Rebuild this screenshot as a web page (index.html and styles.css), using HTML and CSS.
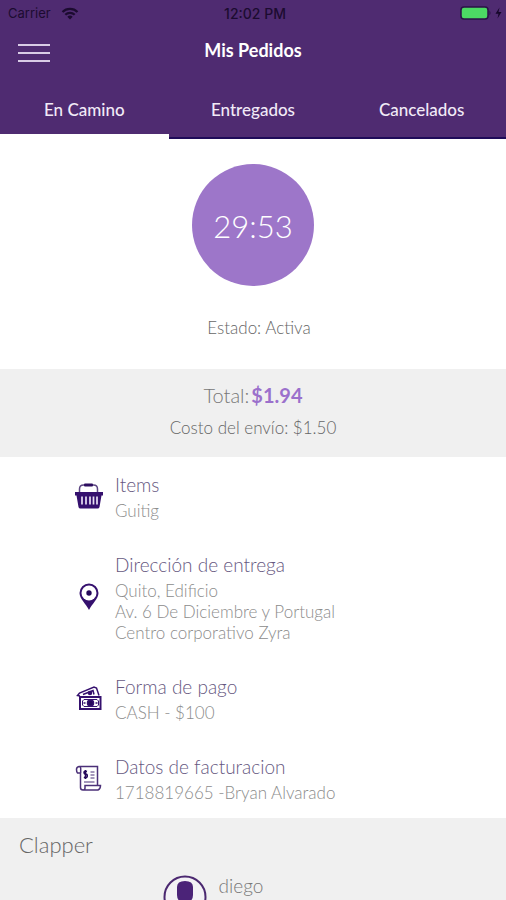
FILE: index.html
```html
<!doctype html>
<html lang="es">

<head>
	<meta charset="UTF-8">
	<meta name="viewport" content="width=device-width, initial-scale=1">
	<title>Mis Pedidos</title>
	<link rel="stylesheet" href="styles.css">
</head>

<body>
	<header class="header">
		<div class="status">
			<div class="carrier">
				<span>Carrier</span>
				<svg width="18" height="13" viewBox="0 0 18 13" fill="none" stroke="#1c0b30" stroke-width="2.2">
					<path d="M1.5 5a10.6 10.6 0 0 1 15 0M4.3 7.8a6.6 6.6 0 0 1 9.4 0" />
					<path d="M9 12.5L6.3 9.8a3.8 3.8 0 0 1 5.4 0z" fill="#1c0b30" stroke="none" />
				</svg>
			</div>
			<span class="clock">12:02 PM</span>
			<div class="battery">
				<svg width="42" height="14" viewBox="0 0 42 14">
					<rect x="1" y="1" width="27" height="12" rx="3" fill="#4cd964" stroke="#2a1246" stroke-width="1.5" />
					<path d="M29.5 4.5q2 2.500 0 5z" fill="#2a1246" />
					<path d="M39.500 1.500L35.500 7.800h3l-1 4.700 4-6.500h-3z" fill="#16072a" />
				</svg>
			</div>
		</div>
		<div class="navbar">
			<button class="menu" type="button" aria-label="Menú">
				<span></span>
				<span></span>
				<span></span>
			</button>
			<h1>Mis Pedidos</h1>
		</div>
		<nav class="tabs">
			<a class="tab active" href="#camino">En Camino</a>
			<a class="tab" href="#entregados">Entregados</a>
			<a class="tab" href="#cancelados">Cancelados</a>
		</nav>
	</header>

	<main>
		<section class="state">
			<div class="timer">29:53</div>
			<p>Estado: Activa</p>
		</section>

		<section class="total">
			<p class="sum"><span>Total:</span><strong>$1.94</strong></p>
			<p class="shipping">Costo del envío: $1.50</p>
		</section>

		<ul class="details">
			<li>
				<svg width="30" height="30" viewBox="0 0 30 30">
					<path d="M5.500 12V8q0-4 4-4h10q4 0 4 4v4" fill="none" stroke="#5d4783" stroke-width="1.500" />
					<rect x="10" y="2.500" width="9" height="3" rx="1" fill="#2c0d5f" />
					<path d="M1 11h28v3.500h-1.500L25.500 26q-.3 1.500-2 1.500h-17q-1.700 0-2-1.500L2.500 14.500H1z" fill="#35106e" />
					<path d="M8 15.500v8M12 15.500v8M16 15.500v8M19.500 15.500v8M23 15.500v8" stroke="#e8e0f2" stroke-width="1.700" />
				</svg>
				<div class="info">
					<h2>Items</h2>
					<p>Guitig</p>
				</div>
			</li>
			<li>
				<svg width="30" height="30" viewBox="0 0 30 30">
					<path d="M15 28C12 22 5.500 16.500 5.500 11a9.500 9.500 0 0 1 19 0C24.500 16.500 18 22 15 28z" fill="#35106e" />
					<circle cx="15" cy="11" r="7.500" fill="#fff" />
					<circle cx="15" cy="11" r="2.700" fill="#25085a" />
				</svg>
				<div class="info">
					<h2>Dirección de entrega</h2>
					<p>Quito, Edificio<br>Av. 6 De Diciembre y Portugal<br>Centro corporativo Zyra</p>
				</div>
			</li>
			<li>
				<svg width="30" height="30" viewBox="0 0 30 30" fill="none" stroke="#35106e" stroke-width="1.500">
					<path d="M6 13L3.500 12.500l2-2.500L20 4l2.500 1 2.500 7.500" />
					<path d="M9 11.500l10-4 1 4" />
					<circle cx="16" cy="10" r="1.500" fill="#35106e" />
					<rect x="6" y="14" width="20.500" height="12" stroke-width="2" />
					<path d="M10 16.500h13l1.500 1.500v4L23 23.500H10L8.500 22v-4z" stroke-width="1" />
					<circle cx="16.500" cy="20" r="3" fill="#25085a" />
					<path d="M9.500 20h2M21.500 20h2" />
				</svg>
				<div class="info">
					<h2>Forma de pago</h2>
					<p>CASH - $100</p>
				</div>
			</li>
			<li>
				<svg width="30" height="30" viewBox="0 0 30 30" fill="none" stroke="#4b3078" stroke-width="1.500">
					<path d="M6.500 10H3.500Q2.500 9 2.500 6.500T5 3.500h18.500V22M6.500 10V23M5 3.500q2 0 1.700 3V10" />
					<path d="M6.500 23v1.500q0 2.500 2.500 2.500h15q2.500-1 2.500-4.500H11V25q0 2-2 2" />
					<path d="M13 8.500q-3-1-3 .8t1.700 1.700 1.600 2.200-3.400 1M11.500 7v9" stroke="#25085a" />
					<path d="M16.500 9h4M16.500 12h4M16.500 15h4M10 19h10.500" stroke-width="1.200" />
				</svg>
				<div class="info">
					<h2>Datos de facturacion</h2>
					<p>1718819665 -Bryan Alvarado</p>
				</div>
			</li>
		</ul>

		<section class="clapper">
			<h2>Clapper</h2>
			<div class="person">
				<svg width="44" height="44" viewBox="0 0 44 44">
					<circle cx="22" cy="22" r="20.500" fill="#f3f1f5" stroke="#4b2870" stroke-width="2" />
					<path d="M14 12q0-6 8-6t8 6v8q0 5-4 7v3l8 4q-5 6-12 6t-12-6l8-4v-3q-4-2-4-7z" fill="#4b2378" />
				</svg>
				<span>diego</span>
			</div>
		</section>
	</main>
</body>

</html>
```

FILE: styles.css
```css
html,
body {
	margin: 0;
	padding: 0;
	height: 100%;
}

body {
	display: flex;
	flex-direction: column;
	background: #fff;
	color: #666;
	font-family: Lato, "Open Sans", sans-serif;
	font-weight: 300;
	font-size: 17px;
}

h1,
h2,
p,
ul {
	margin: 0;
	padding: 0;
	font-weight: 300;
}

svg {
	display: block;
	flex: none;
}

.header {
	flex: none;
	background: #4f2b71;
	color: #fff;
}

.status {
	display: grid;
	grid-template-columns: 1fr auto 1fr;
	align-items: center;
	height: 26px;
	padding: 0 4px 0 8px;
	color: #1c0b30;
	font-family: Inter, "Liberation Sans", sans-serif;
	font-size: 13px;
	font-weight: 400;
}

.carrier {
	display: flex;
	align-items: center;
	gap: 10px;
}

.clock {
	font-size: 14px;
	font-weight: 500;
}

.battery {
	justify-self: end;
}

.navbar {
	display: grid;
	grid-template-columns: 1fr auto 1fr;
	align-items: center;
	height: 54px;
	padding: 0 18px;
}

.navbar h1 {
	padding-bottom: 6px;
	font-size: 18px;
	font-weight: 700;
}

.menu {
	display: flex;
	flex-direction: column;
	gap: 6px;
	width: 32px;
	padding: 0;
	border: 0;
	background: none;
}

.menu span {
	height: 2px;
	width: 100%;
	background: #d9cce6;
}

.tabs {
	display: grid;
	grid-template-columns: repeat(3, 1fr);
}

.tab {
	height: 57px;
	line-height: 60px;
	border-bottom: 2px solid #1f0b59;
	color: #f1eaf7;
	font-size: 17px;
	font-weight: 500;
	text-align: center;
	text-decoration: none;
}

.tab.active {
	height: 54px;
	border-bottom: 5px solid #fff;
}

main {
	flex: 1;
	min-height: 0;
	overflow-y: auto;
	scrollbar-width: none;
}

.state {
	display: flex;
	flex-direction: column;
	align-items: center;
	padding: 25px 0 30px;
}

.timer {
	width: 122px;
	height: 122px;
	line-height: 124px;
	margin-bottom: 31px;
	border-radius: 50%;
	background: #9d76c9;
	color: #fff;
	font-size: 31px;
	text-align: center;
}

.state p {
	padding-left: 12px;
	line-height: 22px;
}

.total {
	padding: 9px 0 13px;
	background: #f0f0f0;
	text-align: center;
}

.sum {
	display: flex;
	justify-content: center;
	gap: 2px;
	line-height: 34px;
	font-size: 20px;
	color: #777;
}

.sum strong {
	color: #9b70cc;
	font-weight: 700;
}

.shipping {
	line-height: 32px;
	font-size: 17px;
}

.details {
	display: flex;
	flex-direction: column;
	gap: 29px;
	padding: 13px 20px 15px 74px;
	list-style: none;
}

.details li {
	display: flex;
	align-items: center;
	gap: 11px;
}

.info h2 {
	line-height: 30px;
	color: #66587f;
	font-size: 19px;
}

.info p {
	line-height: 21px;
	color: #8c8c8c;
	font-size: 17px;
}

.clapper {
	padding: 12px 19px;
	background: #f0f0f0;
}

.clapper h2 {
	line-height: 30px;
	font-size: 22px;
}

.person {
	display: flex;
	justify-content: center;
	gap: 12px;
	padding: 15px 0 20px;
	margin-right: 80px;
	font-size: 19px;
	line-height: 22px;
	color: #777;
}
```
